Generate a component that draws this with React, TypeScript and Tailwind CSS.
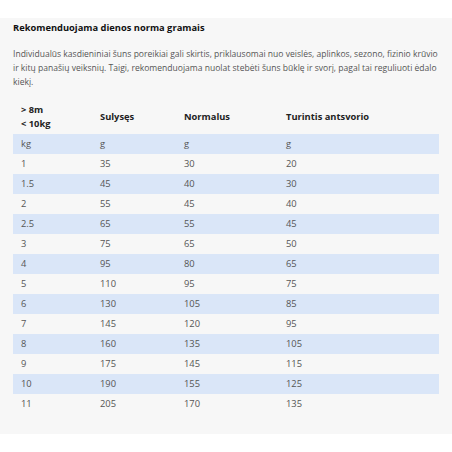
const rows: [string, string, string, string][] = [
  ["1", "35", "30", "20"],
  ["1.5", "45", "40", "30"],
  ["2", "55", "45", "40"],
  ["2.5", "65", "55", "45"],
  ["3", "75", "65", "50"],
  ["4", "95", "80", "65"],
  ["5", "110", "95", "75"],
  ["6", "130", "105", "85"],
  ["7", "145", "120", "95"],
  ["8", "160", "135", "105"],
  ["9", "175", "145", "115"],
  ["10", "190", "155", "125"],
  ["11", "205", "170", "135"],
];

export default function App() {
  return (
    <div className="w-[452px] h-[452px] bg-white pt-[18px] font-['Open_Sans',sans-serif]">
      <div className="bg-[#f7f7f7] px-[13px] pt-[3px] pb-[20px] text-[9.33px] leading-[14px]">
        {/* Title */}
        <h2 className="font-bold text-[#111]">Rekomenduojama dienos norma gramais</h2>

        {/* Intro */}
        <p className="mt-[12px] whitespace-nowrap text-[8.55px] text-[#555]">
          Individualūs kasdieniniai šuns poreikiai gali skirtis, priklausomai nuo veislės, aplinkos, sezono, fizinio krūvio
          <br />
          ir kitų panašių veiksnių. Taigi, rekomenduojama nuolat stebėti šuns būklę ir svorį, pagal tai reguliuoti ėdalo
          <br />
          kiekį.
        </p>

        {/* Norm table */}
        <table className="mt-[11px] w-full table-fixed border-collapse text-[#555]">
          <colgroup>
            <col className="w-[79px]" />
            <col className="w-[84px]" />
            <col className="w-[102px]" />
            <col />
          </colgroup>
          <thead>
            <tr className="text-left font-bold text-[#222]">
              <th className="px-[8px] py-[3px] align-middle">
                &gt; 8m
                <br />
                &lt; 10kg
              </th>
              <th className="px-[8px] py-[3px] align-middle">Sulysęs</th>
              <th className="px-[8px] py-[3px] align-middle">Normalus</th>
              <th className="px-[8px] py-[3px] align-middle">Turintis antsvorio</th>
            </tr>
          </thead>
          <tbody>
            <tr className="bg-[#dae6f8]">
              <td className="px-[8px] py-[3px]">kg</td>
              <td className="px-[8px] py-[3px]">g</td>
              <td className="px-[8px] py-[3px]">g</td>
              <td className="px-[8px] py-[3px]">g</td>
            </tr>
            {rows.map((r, i) => (
              <tr key={r[0]} className={i % 2 === 1 ? "bg-[#dae6f8]" : ""}>
                {r.map((v, j) => (
                  <td key={j} className="px-[8px] py-[3px]">
                    {v}
                  </td>
                ))}
              </tr>
            ))}
          </tbody>
        </table>
      </div>
    </div>
  );
}
